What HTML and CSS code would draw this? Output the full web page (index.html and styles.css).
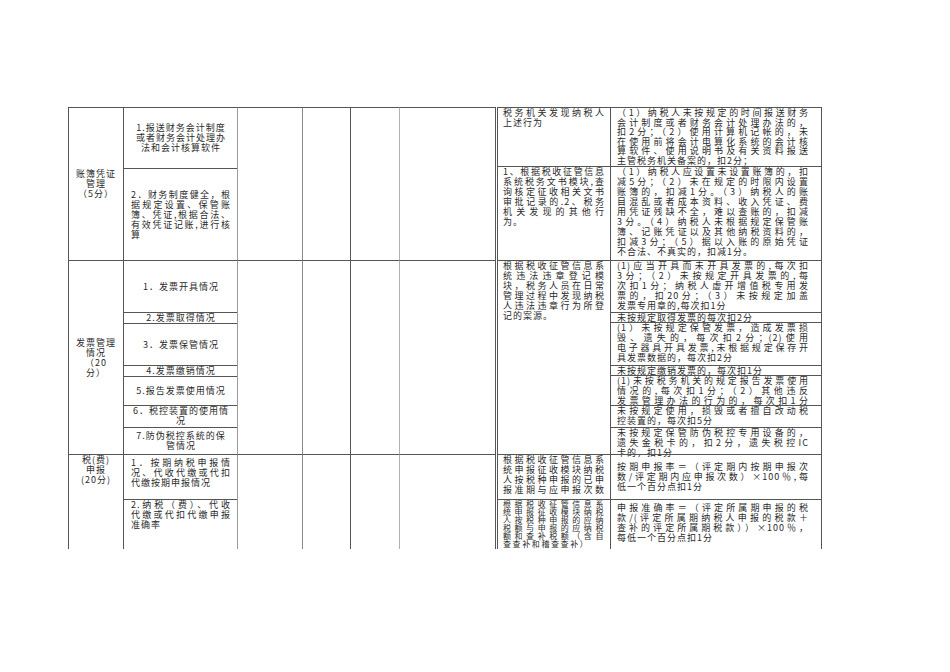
FILE: index.html
```html
<!DOCTYPE html>
<html lang="zh">
<head>
<meta charset="utf-8">
<title>纳税评估表</title>
<link rel="stylesheet" href="styles.css">
</head>
<body>
<div class="sheet">
  <div class="left">
    <div class="c cat k1 sec1 mid"><span>账簿凭证</span><span>管理</span><span>（5分）</span></div>
    <div class="c item k2 r1 mid ctr"><span>1.报送财务会计制度</span><span>或者财务会计处理办</span><span>法和会计核算软件</span></div>
    <div class="c item k2 r2 mid"><span class="j">2．财务制度健全，根</span><span class="j">据规定设置、保管账</span><span class="j">簿、凭证,根据合法、</span><span class="j">有效凭证记账,进行核</span><span>算</span></div>
    <div class="c k3 sec1"></div>
    <div class="c k4 sec1"></div>
    <div class="c k5 sec1"></div>
    <div class="c k6 sec1"></div>

    <div class="c cat k1 sec2 mid"><span>发票管理</span><span>情况</span><span>（20</span><span>分）</span></div>
    <div class="c item k2 r3 mid ctr"><span>1．发票开具情况</span></div>
    <div class="c item k2 r4 mid ctr"><span>2.发票取得情况</span></div>
    <div class="c item k2 r5 mid ctr"><span>3．发票保管情况</span></div>
    <div class="c item k2 r6 mid ctr"><span>4.发票缴销情况</span></div>
    <div class="c item k2 r7 mid ctr"><span>5.报告发票使用情况</span></div>
    <div class="c item k2 r8 top ctr"><span>6．税控装置的使用情</span><span>况</span></div>
    <div class="c item k2 r9 mid ctr"><span>7.防伪税控系统的保</span><span>管情况</span></div>
    <div class="c k3 sec2"></div>
    <div class="c k4 sec2"></div>
    <div class="c k5 sec2"></div>
    <div class="c k6 sec2"></div>

    <div class="c cat k1 sec3 top"><span>税(费)</span><span>申报</span><span>(20分)</span></div>
    <div class="c item k2 r10 top pad3"><span class="j">1．按期纳税申报情</span><span class="j">况、代收代缴或代扣</span><span>代缴按期申报情况</span></div>
    <div class="c item k2 r11 top"><span class="j">2.纳税（费）、代收</span><span class="j">代缴或代扣代缴申报</span><span>准确率</span></div>
    <div class="c k3 sec3"></div>
    <div class="c k4 sec3"></div>
    <div class="c k5 sec3"></div>
    <div class="c k6 sec3"></div>
  </div>

  <div class="right">
    <div class="c src k7 q1"><span class="j">税务机关发现纳税人</span><span>上述行为</span></div>
    <div class="c rule k8 q1 snug"><span class="j">（1）纳税人未按规定的时间报送财务</span><span class="j">会计制度或者财务会计处理办法的，</span><span class="j">扣2分；（2）使用计算机记帐的，未</span><span class="j">在使用前将会计电算化系统的会计核</span><span class="j">算软件、使用说明书及有关资料报送</span><span>主管税务机关备案的，扣2分；</span></div>

    <div class="c src k7 q2"><span class="j">1、根据税收征管信息</span><span class="j">系统税务文书模块,查</span><span class="j">询核定征收相关文书</span><span class="j">审批记录的.2、税务</span><span class="j">机关发现的其他行</span><span>为。</span></div>
    <div class="c rule k8 q2"><span class="j">（1）纳税人应设置未设置账簿的，扣</span><span class="j">减5分；（2）未在规定的时限内设置</span><span class="j">账簿的，扣减1分。（3）纳税人的账</span><span class="j">目混乱或者成本资料、收入凭证、费</span><span class="j">用凭证残缺不全，难以查账的，扣减</span><span class="j">3分。（4）纳税人未根据规定保管账</span><span class="j">簿、记账凭证以及其他纳税资料的，</span><span class="j">扣减3分；（5）据以入账的原始凭证</span><span>不合法、不真实的，扣减1分。</span></div>

    <div class="c src k7 qsec2"><span class="j">根据税收征管信息系</span><span class="j">统违法违章登记模</span><span class="j">块，税务人员在日常</span><span class="j">管理过程中发现纳税</span><span class="j">人违法违章行为所登</span><span>记的案源。</span></div>
    <div class="c rule k8 q3"><span class="j">(1)应当开具而未开具发票的,每次扣</span><span class="j">3分；（2）未按规定开具发票的,每</span><span class="j">次扣1分；纳税人虚开增值税专用发</span><span class="j">票的，扣20分；（3）未按规定加盖</span><span>发票专用章的,每次扣1分</span></div>
    <div class="c rule k8 q4"><span>未按规定取得发票的每次扣2分</span></div>
    <div class="c rule k8 q5"><span class="j">(1）未按规定保管发票，造成发票损</span><span class="j">毁、遗失的，每次扣2分；(2)使用</span><span class="j">电子器具开具发票,未根据规定保存开</span><span>具发票数据的，每次扣2分</span></div>
    <div class="c rule k8 q6"><span>未按规定缴销发票的，每次扣1分</span></div>
    <div class="c rule k8 q7"><span class="j">(1)未按税务机关的规定报告发票使用</span><span class="j">情况的,每次扣1分；（2）其他违反</span><span class="j">发票管理办法的行为的，每次扣1分</span></div>
    <div class="c rule k8 q8"><span class="j">未按规定使用，损毁或者擅自改动税</span><span>控装置的，每次扣5分</span></div>
    <div class="c rule k8 q9"><span class="j">未按规定保管防伪税控专用设备的，</span><span class="j">遗失金税卡的，扣2分，遗失税控IC</span><span>卡的，扣1分</span></div>

    <div class="c src k7 q10"><span class="j">根据税收征管信息系</span><span class="j">统申报征收模块纳税</span><span class="j">人按税种申报的已申</span><span class="j">报准期与应申报次数</span></div>
    <div class="c rule k8 q10 mid"><span class="j">按期申报率＝（评定期内按期申报次</span><span class="j">数/评定期内应申报次数）×100％,每</span><span>低一个百分点扣1分</span></div>

    <div class="c src k7 q11 tight"><span class="j">根据税收征管信息系</span><span class="j">统申报征收模块纳税</span><span class="j">人按税种申报的应纳</span><span class="j">税额与申报的应纳税</span><span class="j">额和查补税额（含自</span><span>查查补和稽查查补）</span></div>
    <div class="c rule k8 q11 pad3"><span class="j">申报准确率＝（评定所属期申报的税</span><span class="j">款/(评定所属期纳税人申报的税款＋</span><span class="j">查补的评定所属期税款））×100％，</span><span>每低一个百分点扣1分</span></div>
  </div>
</div>
</body>
</html>
```

FILE: styles.css
```css
html, body {
  margin: 0;
  padding: 0;
  background: #ffffff;
}

.sheet {
  display: flex;
  align-items: flex-start;
  gap: 1px;
  padding: 107px 0 0 68px;
}

.left {
  display: grid;
  grid-template-columns: 55px 114px 65px 48px 49px 96px;
  grid-template-rows: 61px 92px 52px 11px 42px 11px 29px 22px 27px 45px 50px;
  border-right: 1px solid #555;
}

.right {
  display: grid;
  grid-template-columns: 113px 211px;
  grid-template-rows: 59px 94px 52px 10px 43px 10px 30px 22px 27px 45px 50px;
  border-right: 1px solid #555;
}

.c {
  box-sizing: border-box;
  border-left: 1px solid #555;
  border-top: 1px solid #555;
  font-family: "Noto Sans CJK SC", "Noto Sans", sans-serif;
  font-size: 9px;
  line-height: 10px;
  letter-spacing: 1px;
  color: #2a2a2a;
  min-width: 0;
  min-height: 0;
  overflow: visible;
}

.c > span {
  display: block;
  white-space: nowrap;
}

.c > span.j {
  text-align: justify;
  text-align-last: justify;
}

.mid {
  display: flex;
  flex-direction: column;
  justify-content: center;
}

.top {
  display: flex;
  flex-direction: column;
  justify-content: flex-start;
}

.pad3 {
  padding-top: 3px;
}

.snug {
  line-height: 9.6px;
}

.tight {
  font-size: 8px;
  line-height: 8.1px;
  letter-spacing: 1.6px;
}

.ctr {
  text-align: center;
}

.cat {
  text-align: center;
  padding: 0 2px;
}

.item {
  padding-left: 7px;
  padding-right: 6px;
}

.src {
  padding: 0 5px 0 5px;
}

.rule {
  padding: 0 12px 0 6px;
}

.rule.pad3 {
  padding-top: 3px;
}

/* columns */
.k1 { grid-column: 1; }
.k2 { grid-column: 2; }
.k3 { grid-column: 3; border-left-color: #9a9a9a; }
.k4 { grid-column: 4; border-left-color: #8a8a8a; }
.k5 { grid-column: 5; }
.k6 { grid-column: 6; border-left-color: #b0b0b0; }
.k7 { grid-column: 1; }
.k8 { grid-column: 2; }

/* left rows */
.sec1 { grid-row: 1 / 3; }
.sec2 { grid-row: 3 / 10; }
.sec3 { grid-row: 10 / 12; }
.r1 { grid-row: 1; }
.r2 { grid-row: 2; }
.r3 { grid-row: 3; }
.r4 { grid-row: 4; }
.r5 { grid-row: 5; }
.r6 { grid-row: 6; }
.r7 { grid-row: 7; }
.r8 { grid-row: 8; }
.r9 { grid-row: 9; }
.r10 { grid-row: 10; }
.r11 { grid-row: 11; }

/* right rows */
.q1 { grid-row: 1; }
.q2 { grid-row: 2; }
.qsec2 { grid-row: 3 / 10; }
.q3 { grid-row: 3; }
.q4 { grid-row: 4; }
.q5 { grid-row: 5; }
.q6 { grid-row: 6; }
.q7 { grid-row: 7; }
.q8 { grid-row: 8; }
.q9 { grid-row: 9; }
.q10 { grid-row: 10; }
.q11 { grid-row: 11; }
```
